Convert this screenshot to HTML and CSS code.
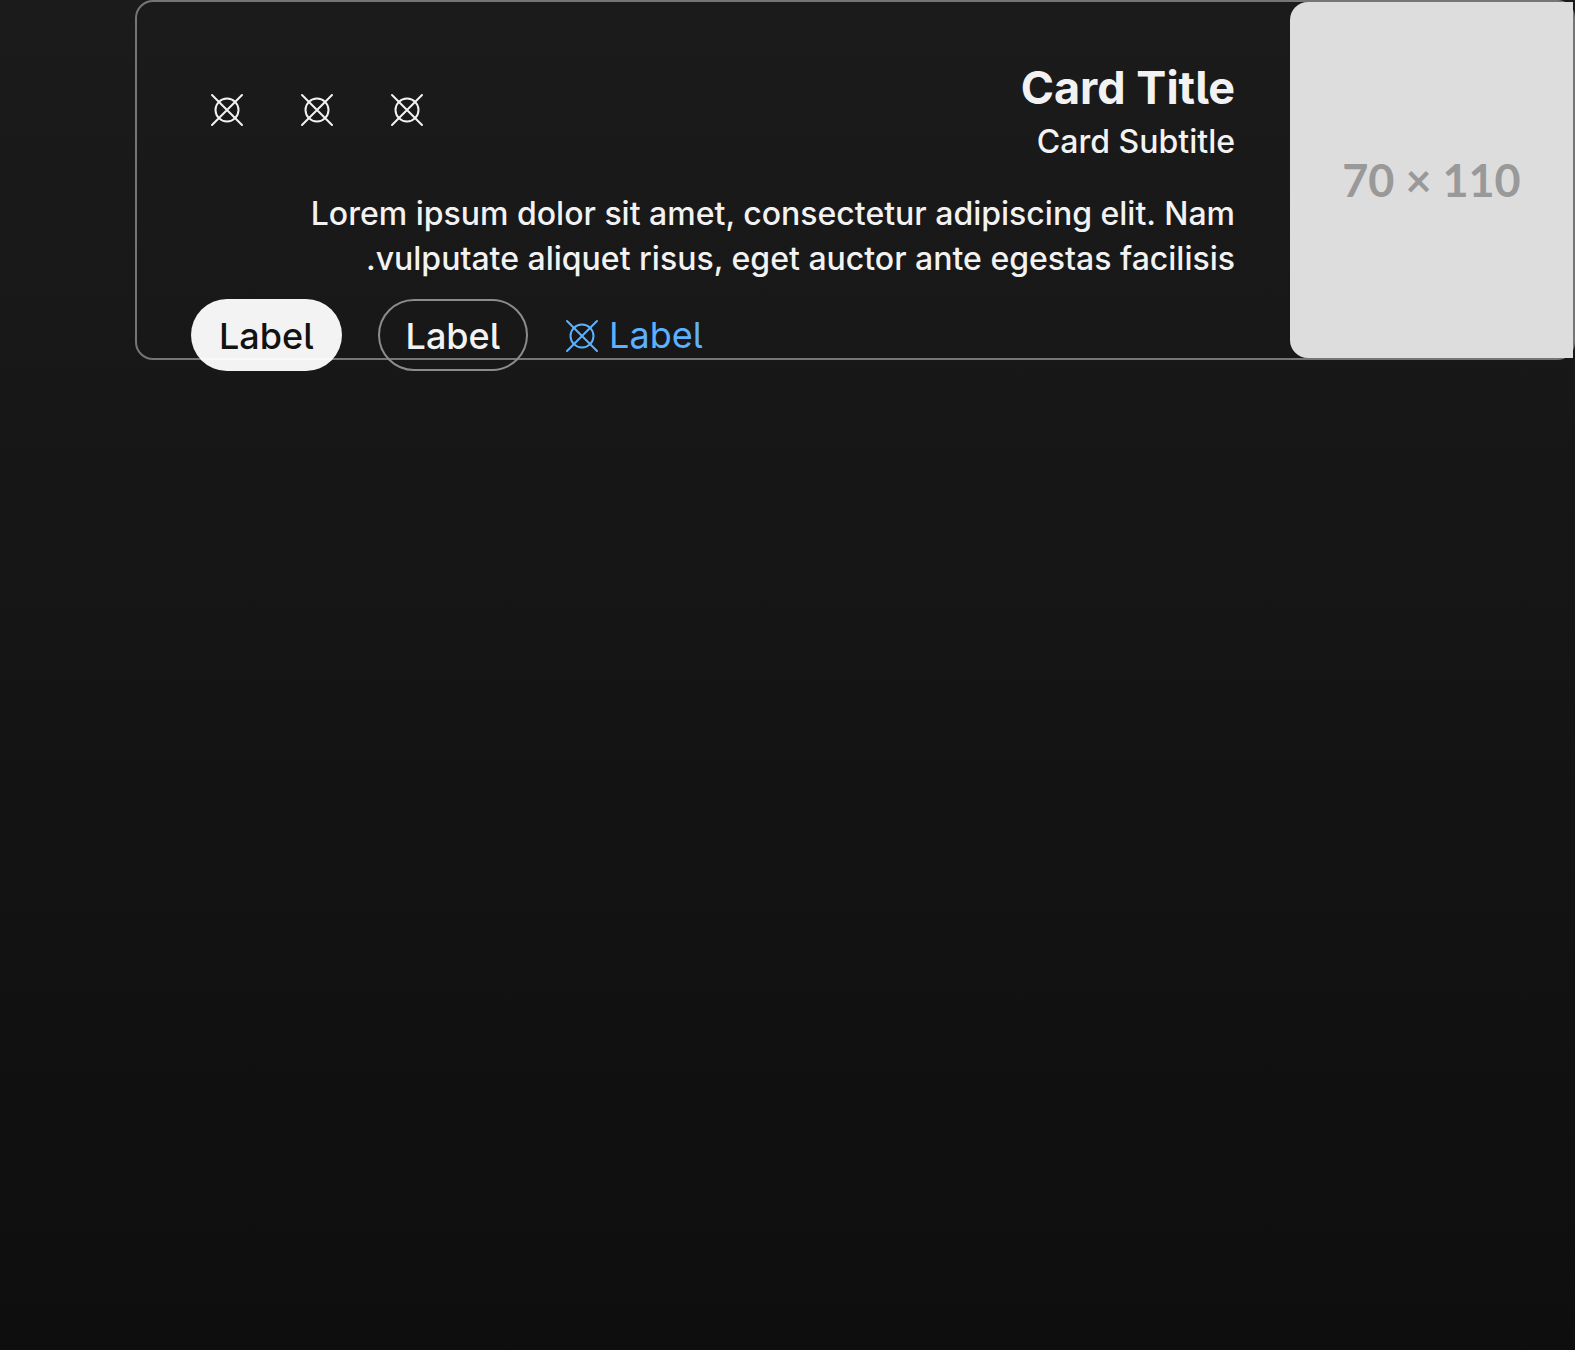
FILE: index.html
```html
<!DOCTYPE html>
<html lang="en" dir="rtl">
<head>
<meta charset="utf-8">
<meta name="viewport" content="width=device-width, initial-scale=1">
<title>Card</title>
<link rel="stylesheet" href="styles.css">
</head>
<body>
<svg class="sprite" aria-hidden="true">
  <symbol id="icon-placeholder" viewBox="0 0 36 36">
    <circle cx="18" cy="18" r="11.5"/>
    <path d="M3 3l30 30M33 3L3 33"/>
  </symbol>
</svg>
<article class="card">
  <div class="card-media">70 × 110</div>
  <div class="card-content">
    <header class="card-header">
      <div class="card-heading">
        <h1 class="card-title">Card Title</h1>
        <p class="card-subtitle">Card Subtitle</p>
      </div>
      <div class="card-actions">
        <button class="icon-button" type="button" aria-label="Action 1"><svg class="icon"><use href="#icon-placeholder"/></svg></button>
        <button class="icon-button" type="button" aria-label="Action 2"><svg class="icon"><use href="#icon-placeholder"/></svg></button>
        <button class="icon-button" type="button" aria-label="Action 3"><svg class="icon"><use href="#icon-placeholder"/></svg></button>
      </div>
    </header>
    <p class="card-text">Lorem ipsum dolor sit amet, consectetur adipiscing elit. Nam vulputate aliquet risus, eget auctor ante egestas facilisis.</p>
    <footer class="card-footer">
      <a class="link" href="#">Label<svg class="icon"><use href="#icon-placeholder"/></svg></a>
      <button class="button button-secondary" type="button">Label</button>
      <button class="button button-primary" type="button">Label</button>
    </footer>
  </div>
</article>
</body>
</html>
```

FILE: styles.css
```css
* {
  box-sizing: border-box;
}

html {
  min-height: 100%;
  background: linear-gradient(#1b1b1b, #0e0e0e);
}

body {
  min-height: 100vh;
  margin: 0;
  padding-left: 135px;
  color: #f2f2f2;
  font-family: Inter, "Liberation Sans", sans-serif;
}

.sprite {
  position: absolute;
  width: 0;
  height: 0;
}

.card {
  display: flex;
  height: 360px;
  border: 2px solid #757575;
  border-radius: 18px;
}

.card-media {
  display: flex;
  flex: none;
  align-items: center;
  justify-content: center;
  width: 283px;
  margin-left: 1px;
  border-radius: 18px 0 0 18px;
  background: #ddd;
  color: #999;
  direction: ltr;
  font: bold 45px Lato, sans-serif;
}

.card-content {
  flex: 1;
  min-width: 0;
  padding: 54px;
}

.card-header {
  display: flex;
  align-items: center;
  justify-content: space-between;
  margin-bottom: 27px;
}

.card-title {
  margin: 0;
  font-size: 45px;
  font-weight: 700;
  line-height: 63px;
  font-feature-settings: "cv05";
}

.card-subtitle,
.card-text {
  margin: 0;
  font-size: 32px;
  font-weight: 450;
  line-height: 45px;
}

.card-actions {
  display: flex;
  gap: 18px;
}

.icon-button {
  display: flex;
  align-items: center;
  justify-content: center;
  width: 72px;
  height: 72px;
  padding: 0;
  border: 0;
  background: none;
  color: inherit;
}

.icon {
  width: 36px;
  height: 36px;
  fill: none;
  stroke: currentColor;
  stroke-width: 2;
  stroke-linecap: round;
}

.card-footer {
  display: flex;
  justify-content: flex-end;
  gap: 36px;
  margin-top: 18px;
}

.button,
.link {
  height: 72px;
  font-family: inherit;
  font-size: 36px;
  line-height: 45px;
  font-feature-settings: "cv05";
}

.button {
  padding: 2px 26px 0;
  border: 2px solid #8c8c8c;
  border-radius: 36px;
  background: none;
  color: inherit;
  font-weight: 450;
}

.button-primary {
  border-color: transparent;
  background: rgba(255, 255, 255, 0.95);
  color: #121212;
}

.link {
  display: flex;
  align-items: center;
  gap: 9px;
  padding-top: 1px;
  color: #5eb1ff;
  text-decoration: none;
}
```
